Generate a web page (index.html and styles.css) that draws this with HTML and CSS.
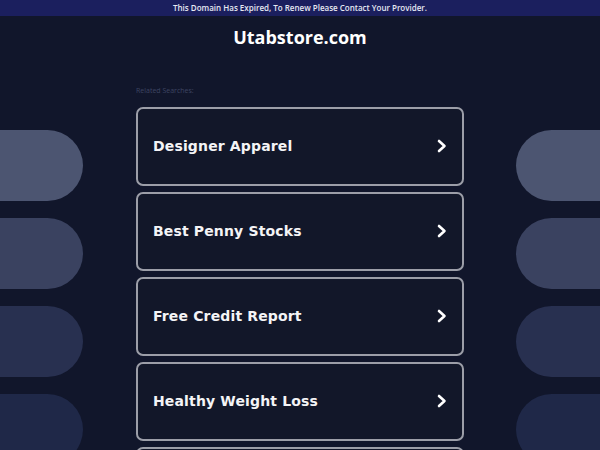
FILE: index.html
```html
<!DOCTYPE html>
<html>
<head>
<meta charset="utf-8">
<link rel="stylesheet" href="styles.css">
</head>
<body>
<div class="topbar">This Domain Has Expired, To Renew Please Contact Your Provider.</div>
<h1 class="domain">Utabstore.com</h1>
<div class="layout">
  <div class="side side-left">
    <div class="pill p1"></div>
    <div class="pill p2"></div>
    <div class="pill p3"></div>
    <div class="pill p4"></div>
  </div>
  <div class="center">
    <div class="related">Related Searches:</div>
    <a class="card" href="#"><span class="label">Designer Apparel</span><svg class="chev" width="12" height="14" viewBox="0 0 12 14"><path d="M3 2 L8.5 7 L3 12" fill="none" stroke="#fff" stroke-width="2.6" stroke-linecap="round" stroke-linejoin="round"/></svg></a>
    <a class="card" href="#"><span class="label">Best Penny Stocks</span><svg class="chev" width="12" height="14" viewBox="0 0 12 14"><path d="M3 2 L8.5 7 L3 12" fill="none" stroke="#fff" stroke-width="2.6" stroke-linecap="round" stroke-linejoin="round"/></svg></a>
    <a class="card" href="#"><span class="label">Free Credit Report</span><svg class="chev" width="12" height="14" viewBox="0 0 12 14"><path d="M3 2 L8.5 7 L3 12" fill="none" stroke="#fff" stroke-width="2.6" stroke-linecap="round" stroke-linejoin="round"/></svg></a>
    <a class="card" href="#"><span class="label">Healthy Weight Loss</span><svg class="chev" width="12" height="14" viewBox="0 0 12 14"><path d="M3 2 L8.5 7 L3 12" fill="none" stroke="#fff" stroke-width="2.6" stroke-linecap="round" stroke-linejoin="round"/></svg></a>
    <a class="card" href="#"></a>
  </div>
  <div class="side side-right">
    <div class="pill p1"></div>
    <div class="pill p2"></div>
    <div class="pill p3"></div>
    <div class="pill p4"></div>
  </div>
</div>
</body>
</html>
```
FILE: styles.css
```css
html, body {
  margin: 0;
  padding: 0;
  background: #11162b;
  height: 100%;
  overflow: hidden;
}
body {
  font-family: "DejaVu Sans", sans-serif;
  color: #fff;
}
.topbar {
  height: 16px;
  line-height: 16px;
  background: #1b1f5e;
  color: #e6e8f2;
  font-family: "Open Sans", "DejaVu Sans", sans-serif;
  font-weight: 600;
  font-size: 8px;
  text-align: center;
}
.domain {
  margin: 0;
  height: 42px;
  line-height: 42px;
  text-align: center;
  font-family: "Open Sans", "DejaVu Sans", sans-serif;
  font-weight: 700;
  font-size: 18px;
  color: #fff;
}
.layout {
  display: flex;
  margin-top: 26px;
}
.side {
  width: 83px;
  flex: none;
  display: flex;
  flex-direction: column;
  gap: 17px;
  padding-top: 46px;
}
.side-left { margin-right: 53px; }
.side-right { margin-left: 52px; width: 84px; }
.pill {
  width: 100%;
  height: 71px;
  flex: none;
}
.side-left .pill { border-radius: 0 36px 36px 0; }
.side-right .pill { border-radius: 36px 0 0 36px; }
.p1 { background: #4c5571; }
.p2 { background: #3a4260; }
.p3 { background: #283050; }
.p4 { background: #1f2848; }
.center {
  width: 328px;
  flex: none;
}
.related {
  font-family: "Open Sans", "DejaVu Sans", sans-serif;
  font-size: 7px;
  color: #3e4562;
  height: 23px;
  line-height: 14px;
}
.card {
  box-sizing: border-box;
  display: flex;
  align-items: center;
  justify-content: space-between;
  height: 78.5px;
  margin-bottom: 6.5px;
  padding: 0 14px 1px 15px;
  border: 2px solid #9c9ea8;
  border-radius: 7px;
  background: #121729;
  text-decoration: none;
  color: #f4f4f6;
}
.label {
  font-family: "DejaVu Sans", sans-serif;
  font-weight: 700;
  font-size: 14px;
  letter-spacing: 0.15px;
}
.chev { display: block; }
```
